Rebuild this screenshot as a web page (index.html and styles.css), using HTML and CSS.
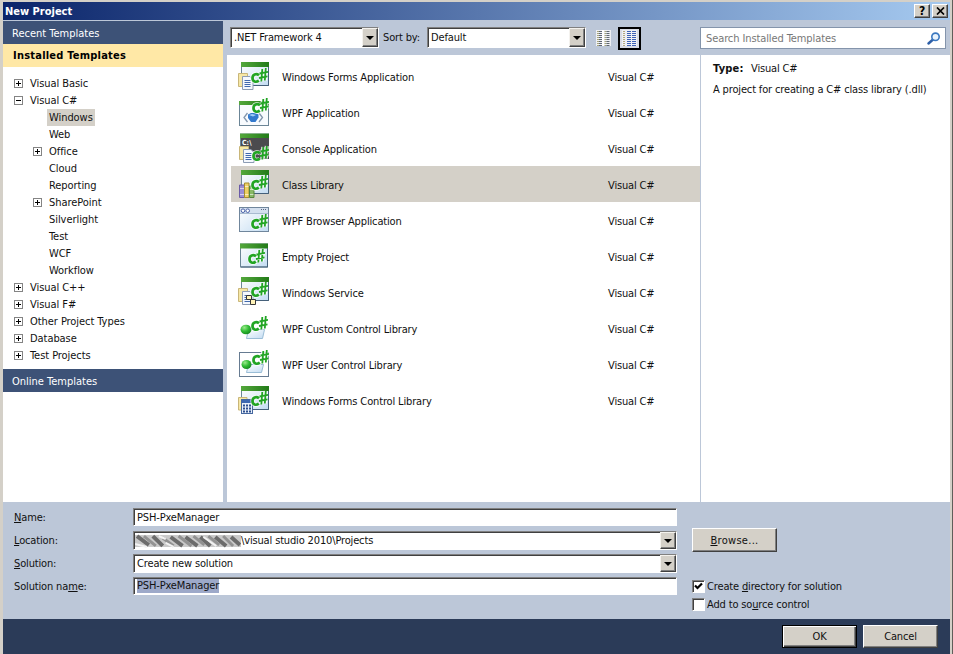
FILE: index.html
```html
<!DOCTYPE html>
<html lang="en">

<head>
    <meta charset="UTF-8">
    <title>New Project</title>
    <link rel="stylesheet" href="styles.css">
</head>

<body>
    <!-- shared icon parts -->
    <svg class="defs" width="0" height="0">
        <defs>
            <linearGradient id="green" x1="0" x2="1" y1="0" y2="0">
                <stop offset="0" stop-color="#54a83c" />
                <stop offset="1" stop-color="#227b18" />
            </linearGradient>
            <linearGradient id="pane" x1="0" x2="1" y1="0" y2="1">
                <stop offset="0" stop-color="#ffffff" />
                <stop offset="1" stop-color="#c3dcf2" />
            </linearGradient>
            <radialGradient id="ball" cx=".35" cy=".3" r=".8">
                <stop offset="0" stop-color="#9bea8c" />
                <stop offset=".5" stop-color="#2fbb33" />
                <stop offset="1" stop-color="#12801b" />
            </radialGradient>
            <symbol id="window" viewBox="0 0 28 24">
                <rect x=".5" y=".5" width="27" height="23" fill="url(#pane)" stroke="#6b8596" />
                <rect x="0" y="0" width="28" height="5" fill="url(#green)" />
                <path d="M27.5 5V23.5H1" fill="none" stroke="#45607a" />
            </symbol>
            <symbol id="cs" viewBox="0 0 18 18">
                <g fill="none" stroke="#fff" stroke-width="4.2" opacity=".8">
                    <path d="M9 8.300C6.200 6 2.500 7.400 2.500 11C2.500 14.600 6 15.800 8.800 13.700" />
                    <path d="M12.300 2L11.300 14.500M15.800 1L14.800 13.500M9.500 6.500L18 4.800M9 11L17.500 9.300" />
                </g>
                <g fill="none" stroke="#22a524">
                    <path stroke-width="2.700" d="M9 8.300C6.200 6 2.500 7.400 2.500 11C2.500 14.600 6 15.800 8.800 13.700" />
                    <path stroke-width="1.800" d="M12.300 2L11.300 14.500M15.800 1L14.800 13.500M9.500 6.500L18 4.800M9 11L17.500 9.300" />
                </g>
            </symbol>
            <symbol id="doc" viewBox="0 0 16 17">
                <path d="M.5 .5H9.500V13.500H.5Z" fill="#f6e7a5" stroke="#c9b679" />
                <path d="M4.500 3.500H12L15 6.500V16.500H4.500Z" fill="#f4f8fd" stroke="#8c9cb4" />
                <path d="M6.500 7.500H12.500M6.500 9.500H12.500M6.500 11.500H12.500M6.500 13.500H12.500" stroke="#4169ad" />
            </symbol>
        </defs>
    </svg>

    <div class="dialog">
        <div class="title-bar">
            <span class="title">New Project</span>
            <span class="title-button">?</span>
            <span class="title-button">
                <svg width="9" height="8" viewBox="0 0 9 8"><path d="M1 0.500L8 7.500M8 .5L1 7.500" stroke="#000" stroke-width="1.700" /></svg>
            </span>
        </div>

        <div class="main">
            <div class="sidebar">
                <div class="section">Recent Templates</div>
                <div class="section active">Installed Templates</div>
                <ul class="tree">
                    <li><i class="toggle plus"></i><span>Visual Basic</span></li>
                    <li><i class="toggle"></i><span>Visual C#</span></li>
                    <li class="sub"><i class="blank"></i><span class="selected">Windows</span></li>
                    <li class="sub"><i class="blank"></i><span>Web</span></li>
                    <li class="sub"><i class="toggle plus"></i><span>Office</span></li>
                    <li class="sub"><i class="blank"></i><span>Cloud</span></li>
                    <li class="sub"><i class="blank"></i><span>Reporting</span></li>
                    <li class="sub"><i class="toggle plus"></i><span>SharePoint</span></li>
                    <li class="sub"><i class="blank"></i><span>Silverlight</span></li>
                    <li class="sub"><i class="blank"></i><span>Test</span></li>
                    <li class="sub"><i class="blank"></i><span>WCF</span></li>
                    <li class="sub"><i class="blank"></i><span>Workflow</span></li>
                    <li><i class="toggle plus"></i><span>Visual C++</span></li>
                    <li><i class="toggle plus"></i><span>Visual F#</span></li>
                    <li><i class="toggle plus"></i><span>Other Project Types</span></li>
                    <li><i class="toggle plus"></i><span>Database</span></li>
                    <li><i class="toggle plus"></i><span>Test Projects</span></li>
                </ul>
                <div class="section">Online Templates</div>
            </div>

            <div class="content">
                <div class="toolbar">
                    <div class="combo framework"><span>.NET Framework 4</span><b class="arrow"></b></div>
                    <span class="sort-label">Sort by:</span>
                    <div class="combo sort"><span>Default</span><b class="arrow"></b></div>
                    <div class="view-button">
                        <svg width="15" height="16" viewBox="0 0 15 16">
                            <rect width="15" height="16" fill="#eef0f4" />
                            <path d="M2 1V16M9.500 1V16" stroke="#a8a67c" stroke-width="2" stroke-dasharray="1 1" />
                            <path d="M4.500 1V16M12 1V16" stroke="#5d6672" stroke-width="3" stroke-dasharray="1 1" />
                            <path d="M7 0V16" stroke="#fff" stroke-width="2" />
                        </svg>
                    </div>
                    <div class="view-button pressed">
                        <svg width="15" height="16" viewBox="0 0 15 16">
                            <rect width="15" height="16" fill="#eef0f4" />
                            <path d="M2 1V16" stroke="#b3a880" stroke-width="2" stroke-dasharray="1 1" />
                            <path d="M7 1V16M12 1V16" stroke="#3f62b4" stroke-width="4" stroke-dasharray="1 1" />
                        </svg>
                    </div>
                    <div class="search">
                        <span>Search Installed Templates</span>
                        <svg width="14" height="13" viewBox="0 0 14 13">
                            <path d="M6 7.500L1.500 11.500" stroke="#2d5fa8" stroke-width="2.400" stroke-linecap="round" />
                            <circle cx="8.500" cy="4.800" r="3.700" fill="#eaf4fd" stroke="#3b78c0" stroke-width="1.600" />
                        </svg>
                    </div>
                </div>

                <div class="panes">
                    <div class="templates">
                        <div class="template">
                            <svg width="32" height="32">
                                <use href="#window" x="3" y="2" width="28" height="24" />
                                <use href="#doc" x="0" y="13" width="16" height="17" />
                                <use href="#cs" x="12" y="7" width="18" height="18" />
                            </svg>
                            <span class="name">Windows Forms Application</span><span>Visual C#</span>
                        </div>
                        <div class="template">
                            <svg width="32" height="32">
                                <rect x="1.500" y="5.500" width="29" height="24" fill="#f8fbfe" stroke="#6b8596" />
                                <rect x="1" y="5" width="30" height="4" fill="url(#green)" />
                                <path d="M9.500 17L6 21.500L9.500 26M21 17L24.500 21.500L21 26" fill="none" stroke="#8196ad" stroke-width="1.300" />
                                <path d="M10 18.500L13 17H18L20.500 18.500V21.500L17.500 26H13L10 22Z" fill="#3379cd" />
                                <path d="M11 19L14 18L18 19L15 20.500Z" fill="#a4d0f8" />
                                <use href="#cs" x="13" y="1" width="18" height="18" />
                            </svg>
                            <span class="name">WPF Application</span><span>Visual C#</span>
                        </div>
                        <div class="template">
                            <svg width="32" height="32">
                                <use href="#window" x="2" y="1" width="29" height="26" />
                                <path d="M3 6H31V27H3Z" fill="#4b4b4e" />
                                <text x="4" y="13" class="prompt">C:\</text>
                                <use href="#doc" x="1" y="14" width="16" height="17" />
                                <use href="#cs" x="13" y="13" width="18" height="18" />
                            </svg>
                            <span class="name">Console Application</span><span>Visual C#</span>
                        </div>
                        <div class="template selected">
                            <svg width="32" height="32">
                                <use href="#window" x="3" y="2" width="28" height="24" />
                                <path d="M1.500 17H6.500V29.500H1.500Z" fill="#9a8ed4" stroke="#6a5ba7" />
                                <path d="M6.500 15H11V29.500H6.500Z" fill="#ecd065" stroke="#a68c30" />
                                <path d="M11.500 18H16V29.500H11.500Z" fill="#88b865" stroke="#57843c" />
                                <path d="M2 20.500H6M7 18.500H10.500M12 21.500H15.500M2 26.500H6M7 26.500H10.500M12 26.500H15.500" stroke="#fff" opacity=".6" />
                                <use href="#cs" x="12" y="6" width="18" height="18" />
                            </svg>
                            <span class="name">Class Library</span><span>Visual C#</span>
                        </div>
                        <div class="template">
                            <svg width="32" height="32">
                                <rect x="1.500" y="3.500" width="29" height="24" fill="url(#pane)" stroke="#70869c" />
                                <path d="M2 4H30V9.500H2Z" fill="#d4e0ef" />
                                <path d="M2 9.500H30" stroke="#a8bbd0" />
                                <circle cx="5" cy="6.700" r="1.800" fill="#fff" stroke="#4e65aa" />
                                <circle cx="9.700" cy="6.700" r="1.800" fill="#fff" stroke="#4e65aa" />
                                <path d="M23 5.500H29" stroke="#5b6780" stroke-dasharray="1 1" />
                                <use href="#cs" x="12" y="9" width="18" height="18" />
                            </svg>
                            <span class="name">WPF Browser Application</span><span>Visual C#</span>
                        </div>
                        <div class="template">
                            <svg width="32" height="32">
                                <use href="#window" x="2" y="3" width="28" height="25" />
                                <use href="#cs" x="9" y="8" width="18" height="18" />
                            </svg>
                            <span class="name">Empty Project</span><span>Visual C#</span>
                        </div>
                        <div class="template">
                            <svg width="32" height="32">
                                <use href="#window" x="3" y="1" width="28" height="24" />
                                <use href="#doc" x="0" y="12" width="16" height="17" />
                                <use href="#cs" x="12" y="5" width="18" height="18" />
                                <path d="M8.500 19.500H13.500V23.500H8.500ZM12.500 23.500H17.500V28.500H12.500Z" fill="#fff3b8" stroke="#373737" />
                            </svg>
                            <span class="name">Windows Service</span><span>Visual C#</span>
                        </div>
                        <div class="template">
                            <svg width="32" height="32">
                                <path d="M10.500 17.500H26.500L24.500 26.500H8.500Z" fill="url(#pane)" stroke="#9abdd6" />
                                <ellipse cx="8" cy="17.500" rx="5.500" ry="4.800" fill="url(#ball)" />
                                <use href="#cs" x="12" y="3" width="18" height="18" />
                            </svg>
                            <span class="name">WPF Custom Control Library</span><span>Visual C#</span>
                        </div>
                        <div class="template">
                            <svg width="32" height="32">
                                <rect x="1.500" y="4.500" width="29" height="24" fill="#fff" stroke="#667b91" />
                                <path d="M10.500 16.500H25.500L23.500 24.500H8.500Z" fill="url(#pane)" stroke="#9abdd6" />
                                <ellipse cx="8.500" cy="16.500" rx="5" ry="4.500" fill="url(#ball)" />
                                <use href="#cs" x="13" y="1" width="18" height="18" />
                            </svg>
                            <span class="name">WPF User Control Library</span><span>Visual C#</span>
                        </div>
                        <div class="template">
                            <svg width="32" height="32">
                                <use href="#window" x="3" y="2" width="28" height="24" />
                                <path d="M.5 13.500H9V26H.5Z" fill="#f6e7a5" stroke="#c9b679" />
                                <rect x="3.500" y="15.500" width="11" height="14" fill="#e8f0fa" stroke="#45679f" />
                                <rect x="4" y="16" width="10" height="3" fill="#3d68b0" />
                                <path d="M5 21.500H13M5 24.500H13M5 27.500H13" stroke="#2d4e8d" stroke-width="2" stroke-dasharray="2 1" />
                                <use href="#cs" x="12" y="6" width="18" height="18" />
                            </svg>
                            <span class="name">Windows Forms Control Library</span><span>Visual C#</span>
                        </div>
                    </div>

                    <div class="details">
                        <p><b>Type:</b><span>Visual C#</span></p>
                        <p class="description">A project for creating a C# class library (.dll)</p>
                    </div>
                </div>
            </div>
        </div>

        <div class="form">
            <div class="fields">
                <label><u>N</u>ame:</label>
                <div class="field">PSH-PxeManager</div>
                <label><u>L</u>ocation:</label>
                <div class="combo">
                    <svg class="scribble" width="106" height="14" viewBox="0 0 107 14">
                        <rect y="1" width="107" height="12" fill="#c9c9c9" />
                        <path d="M2 2L14 11M18 2L28 12M36 3L48 12M51 3L63 12M66 3L76 12M81 3L92 12M97 3L106 11" stroke="#6c6c6c" stroke-width="4" />
                        <path d="M9 2L21 12M28 4L39 12M44 2L57 12M59 2L70 11M74 2L85 11M89 2L99 12" stroke="#929292" stroke-width="3" />
                        <path d="M0 10L12 13M24 2L31 5M31 9L39 13M69 3L82 12" stroke="#f2f2f2" stroke-width="2" />
                    </svg>
                    <span>\visual studio 2010\Projects</span><b class="arrow"></b>
                </div>
                <label><u>S</u>olution:</label>
                <div class="combo"><span>Create new solution</span><b class="arrow"></b></div>
                <label>Solution na<u>m</u>e:</label>
                <div class="field"><span class="highlight">PSH-PxeManager</span></div>
            </div>
            <div class="options">
                <div class="button browse"><span><u>B</u>rowse...</span></div>
                <div class="check">
                    <i class="box"><svg width="9" height="9" viewBox="0 0 9 9"><path d="M1 3.500L3.500 6L8 1.500" fill="none" stroke="#000" stroke-width="2.200" /></svg></i>
                    <span>Create <u>d</u>irectory for solution</span>
                </div>
                <div class="check"><i class="box"></i><span>Add to so<u>u</u>rce control</span></div>
            </div>
        </div>

        <div class="footer">
            <div class="button default">OK</div>
            <div class="button">Cancel</div>
        </div>
    </div>
</body>

</html>
```
FILE: styles.css
```css
* {
    margin: 0;
    padding: 0;
    box-sizing: border-box;
}

body {
    width: 953px;
    height: 654px;
    overflow: hidden;
    background: #d4d0c8;
    font-family: 'DejaVu Sans Condensed', 'Noto Sans', sans-serif;
    font-size: 11px;
    letter-spacing: -0.15px;
    color: #111;
    white-space: nowrap;
}

.defs {
    position: absolute;
}

.dialog {
    height: 654px;
    padding: 2px 2px 0 3px;
    border-right: 1px solid #605e5a;
    display: flex;
    flex-direction: column;
}

.title-bar {
    height: 18px;
    padding: 0 2px 0 2px;
    display: flex;
    align-items: center;
    gap: 2px;
    background: linear-gradient(to right, #0a246a, #a6caf0);
    color: white;
}

.title {
    flex: 1;
    font-weight: bold;
    letter-spacing: 0;
}

.title-button {
    width: 16px;
    height: 14px;
    display: flex;
    align-items: center;
    justify-content: center;
    background: #d4d0c8;
    border: 1px solid;
    border-color: #fff #404040 #404040 #fff;
    box-shadow: inset -1px -1px #808080;
    color: #000;
    font-size: 12px;
    font-weight: bold;
}

.main {
    height: 482px;
    padding-top: 1px;
    display: flex;
    gap: 4px;
    background: #bcc7d8;
}

.sidebar {
    width: 220px;
    background: white;
}

.section {
    height: 23px;
    padding-left: 9px;
    line-height: 25px;
    letter-spacing: 0;
    background: #3d5277;
    color: white;
}

.section.active {
    padding-left: 10px;
    line-height: 24px;
    background: #ffe8a6;
    color: #000;
    font-weight: bold;
    letter-spacing: 0.22px;
}

.tree {
    height: 302px;
    padding: 8px 0 0 11px;
    list-style: none;
    letter-spacing: -0.06px;
}

.tree li {
    height: 17px;
    display: flex;
    align-items: center;
    gap: 5px;
}

.tree .sub {
    padding-left: 19px;
}

.tree span {
    height: 17px;
    padding: 0 2px;
    line-height: 17px;
}

.tree .selected {
    background: #d4d0c8;
}

.toggle,
.blank {
    width: 9px;
    height: 9px;
}

.toggle {
    border: 1px solid #848484;
    background: linear-gradient(#000, #000) center / 5px 1px no-repeat;
}

.toggle.plus {
    background: linear-gradient(#000, #000) center / 5px 1px no-repeat, linear-gradient(#000, #000) center / 1px 5px no-repeat;
}

.content {
    flex: 1;
    display: flex;
    flex-direction: column;
}

.toolbar {
    height: 34px;
    padding: 6px 4px 0 3px;
    display: flex;
    align-items: flex-start;
}

.combo,
.field {
    padding-left: 3px;
    display: flex;
    align-items: center;
    background: white;
    border: 1px solid;
    border-color: #808080 #fff #fff #808080;
    box-shadow: inset 1px 1px #404040;
}

.combo span {
    flex: 1;
}

.arrow {
    width: 16px;
    height: 100%;
    display: flex;
    align-items: center;
    justify-content: center;
    background: #d4d0c8;
    border: 1px solid;
    border-color: #f4f2ee #404040 #404040 #f4f2ee;
    box-shadow: inset -1px -1px #808080;
}

.arrow::after {
    content: '';
    border: 4px solid transparent;
    border-top-color: #000;
    border-bottom: 0;
}

.framework {
    width: 149px;
    height: 21px;
}

.sort {
    width: 159px;
    height: 21px;
}

.sort-label {
    width: 48px;
    padding-left: 4px;
    line-height: 22px;
}

.view-button {
    width: 15px;
    margin: 3px 0 0 10px;
}

.view-button svg {
    display: block;
}

.pressed {
    width: 23px;
    height: 23px;
    margin: 0 0 0 7px;
    padding: 2px 3px;
    border: 1px solid #000;
    box-shadow: inset 0 0 0 1px #000;
    background: #d9dce4;
}

.search {
    width: 246px;
    height: 22px;
    margin-left: auto;
    padding: 1px 4px 0 5px;
    display: flex;
    align-items: center;
    justify-content: space-between;
    background: white;
    border: 1px solid #8494ab;
    color: #777;
    letter-spacing: -0.1px;
}

.panes {
    flex: 1;
    display: flex;
    background: white;
}

.templates {
    width: 474px;
    padding: 3px 0 0 4px;
    border-right: 1px solid #bcc7d8;
}

.template {
    height: 36px;
    padding-left: 7px;
    display: flex;
    align-items: center;
}

.template.selected {
    background: #d4d0c8;
}

.template span {
    padding-top: 2px;
}

.template .name {
    width: 326px;
    margin-left: 12px;
}

.prompt {
    font-size: 7px;
    font-weight: bold;
    letter-spacing: 0;
    fill: #fff;
}

.details {
    padding: 6px 0 0 12px;
}

.details p {
    height: 21px;
    line-height: 15px;
}

.details b {
    display: inline-block;
    width: 38px;
    letter-spacing: 0.2px;
}

.form {
    height: 117px;
    padding: 6px 0 0 11px;
    display: flex;
    gap: 15px;
    background: #bcc7d8;
}

.fields {
    display: grid;
    grid-template-columns: 119px 544px;
    grid-auto-rows: 23px;
    align-items: start;
}

.fields label {
    line-height: 19px;
}

.field {
    height: 18px;
}

.fields .combo {
    height: 19px;
}

.scribble {
    margin-left: -2px;
}

.highlight {
    background: #9da9c9;
    line-height: 14px;
}

.options {
    padding-top: 20px;
}

.button {
    width: 75px;
    height: 23px;
    display: flex;
    align-items: center;
    justify-content: center;
    background: #d4d0c8;
    border: 1px solid;
    border-color: #fff #404040 #404040 #fff;
    box-shadow: inset -1px -1px #808080;
}

.browse {
    width: 85px;
    height: 24px;
    margin-bottom: 25px;
    letter-spacing: 0.3px;
}

.check {
    height: 18px;
    display: flex;
    align-items: center;
    gap: 2px;
}

.box {
    width: 13px;
    height: 13px;
    display: flex;
    align-items: center;
    justify-content: center;
    background: white;
    border: 1px solid;
    border-color: #808080 #fff #fff #808080;
    box-shadow: inset 1px 1px #404040;
}

.footer {
    flex: 1;
    padding: 6px 12px 0 0;
    display: flex;
    justify-content: flex-end;
    gap: 6px;
    background: #2b3b58;
}

.default {
    border-color: #000;
    box-shadow: inset 1px 1px #fff, inset -1px -1px #404040, inset -2px -2px #808080;
}
```
